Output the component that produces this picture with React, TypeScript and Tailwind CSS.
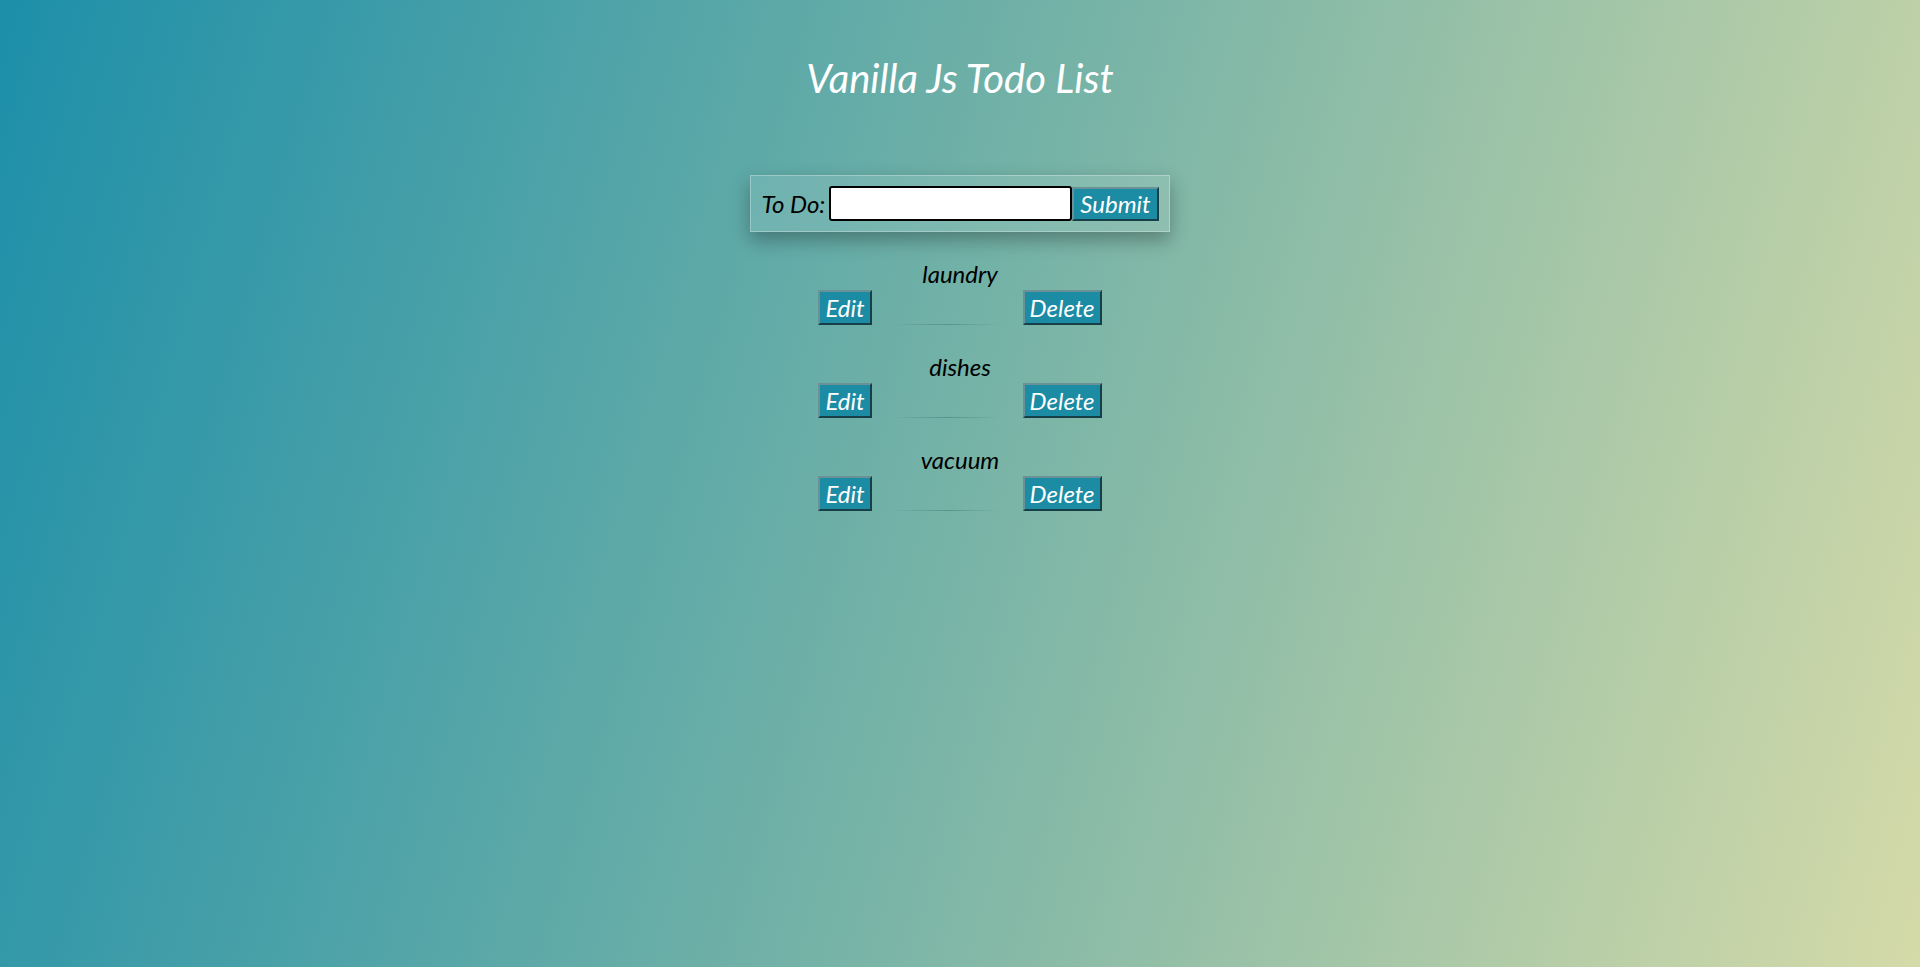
const TODOS = ['laundry', 'dishes', 'vacuum'];

function Btn({ children }: { children: React.ReactNode }) {
  return (
    <button className="bg-[#1c8ba4] text-white text-[24px] leading-[29px] px-[5px] py-[1px] border-2 border-t-[#6a9196] border-l-[#6a9196] border-b-[#163f48] border-r-[#163f48] italic">
      {children}
    </button>
  );
}

export default function App() {
  return (
    <div className="min-h-screen w-full bg-[linear-gradient(106deg,#1d8fa9_0%,#76b3a7_50%,#d5daa8_100%)] font-['Lato','Liberation_Sans',sans-serif] italic flex flex-col items-center">
      <h1 className="mt-[54px] text-[40px] leading-[48px] text-white">Vanilla Js Todo List</h1>

      <form
        className="mt-[73px] flex items-center p-[10px] border border-white/30 bg-white/10 shadow-[0_8px_18px_rgba(0,0,0,0.3)]"
        onSubmit={(e) => e.preventDefault()}
      >
        <label className="text-[24px] leading-[29px] text-black mr-[4px]">To Do:</label>
        <input className="w-[243px] h-[35px] bg-white border-2 border-black rounded-[3px] outline-none" />
        <button className="h-[34px] bg-[#1c8ba4] text-white text-[24px] leading-[29px] px-[6px] border-2 border-t-[#6a9196] border-l-[#6a9196] border-b-[#163f48] border-r-[#163f48] italic">
          Submit
        </button>
      </form>

      <ul className="mt-[27px] flex flex-col gap-[27px]">
        {TODOS.map((t) => (
          <li key={t} className="flex flex-col items-center">
            <span className="text-[24px] leading-[29px] text-black">{t}</span>
            <div className="mt-[2px] flex items-end">
              <Btn>Edit</Btn>
              <div className="w-[151px] h-[35px] flex items-end justify-center">
                <div className="w-[110px] h-px bg-[linear-gradient(90deg,transparent,rgba(0,60,70,0.25),transparent)]" />
              </div>
              <Btn>Delete</Btn>
            </div>
          </li>
        ))}
      </ul>
    </div>
  );
}
